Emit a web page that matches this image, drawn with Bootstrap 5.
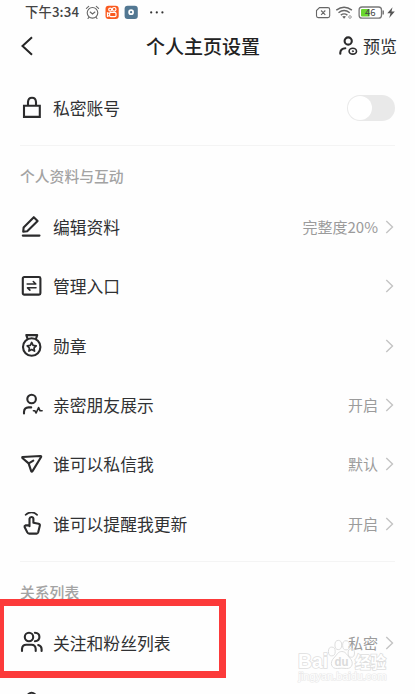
<!DOCTYPE html>
<html lang="zh-CN">
<head>
<meta charset="utf-8">
<meta name="viewport" content="width=device-width, initial-scale=1">
<title>个人主页设置</title>
<link href="https://cdn.jsdelivr.net/npm/bootstrap@5.3.0/dist/css/bootstrap.min.css" rel="stylesheet">
<style>
  body { font-family: "Noto Sans CJK SC", sans-serif; background: #fefefe; color: #303133; overflow: hidden; }
  svg { display: block; flex: none; }
  .screen { width: 415px; height: 694px; overflow: hidden; }
  .status { height: 23px; padding: 0 18px 0 25px; color: #444; }
  .clock { font: 500 13.3px/22px "Noto Sans CJK SC", sans-serif; letter-spacing: .15px; width: 60px; white-space: nowrap; }
  .topbar { height: 46px; padding: 0 18px 0 19px; }
  .page-title { font-size: 19px; font-weight: 500; line-height: 28px; color: #222; margin: 0 0 0 112px; }
  .preview { font-size: 17px; line-height: 24px; gap: 5px; }
  .setting { height: 59.3px; padding: 0 21px 0 20px; font-size: 16.8px; line-height: 24px; gap: 9px; }
  .first { height: 76px; padding-top: 1px; }
  .ico { fill: none; stroke: #2b2b2c; stroke-width: 2.1; stroke-linecap: round; stroke-linejoin: round; }
  .value { font-size: 15px; line-height: 22px; color: #9b9b9b; gap: 7px; }
  .chev { fill: none; stroke: #c4c4c4; stroke-width: 1.4; }
  .toggle { width: 48px; height: 26px; background: #e9e9e9; border-radius: 13px; padding: 1px; margin-right: -1px; }
  .knob { width: 24px; height: 24px; border-radius: 50%; background: #fff; }
  .rule { height: 1px; margin: 0 20px; background: #f4f4f4; }
  .section-name { font-size: 14.8px; font-weight: 500; line-height: 22px; color: #a3a3a3; padding-left: 20px; height: 51.5px; padding-top: 19px; }
  .marker { left: -3px; top: 599px; width: 229px; height: 79px; border: 7px solid #fc3a3a; }
  .watermark { left: 294px; top: 634px; }
</style>
<script src="https://cdn.jsdelivr.net/npm/bootstrap@5.3.0/dist/js/bootstrap.bundle.min.js"></script>
</head>
<body>
<main class="screen position-relative">
  <div class="status d-flex align-items-center">
    <span class="clock">下午3:34</span>
    <svg width="80" height="22" viewBox="85 0 80 22">
      <g fill="none" stroke="#666" stroke-width="1.1" stroke-linecap="round"><circle cx="92.5" cy="11.8" r="5.3"/><path d="M90.2 11l2.3 2 2.4-2M86.4 7.4l2.3-2M98.6 7.4l-2.3-2M89 16.3l-1 1.2M96 16.3l1 1.2"/></g>
      <rect x="105.5" y="4.7" width="13.2" height="13.3" rx="3" fill="#fa5a1f"/>
      <g fill="none" stroke="#fff" stroke-width="1.2"><circle cx="110.2" cy="8.6" r="1.5"/><circle cx="114.2" cy="8.3" r="1.8"/><rect x="109.6" y="11.4" width="6.4" height="4.3" rx="1.2"/><path d="M109.5 12.5l-2-.7v3.5l2-.8"/></g>
      <rect x="124.6" y="4.7" width="13.2" height="13.3" rx="3" fill="#527792"/><circle cx="131.1" cy="11.2" r="2" fill="none" stroke="#fff" stroke-width="1.7"/>
      <g fill="#333"><circle cx="151.2" cy="11.4" r="1.1"/><circle cx="156.8" cy="11.4" r="1.1"/><circle cx="162.4" cy="11.4" r="1.1"/></g>
    </svg>
    <svg class="ms-auto" width="82" height="22" viewBox="315 0 82 22">
      <path d="M319.5 6.6h8.4q1.8 0 1.8 1.8v6.4q0 1.8-1.8 1.8h-9.6q-1.8 0-1.8-1.8V9.5zM321.1 9.5l4.2 4.4M325.3 9.5l-4.2 4.4" fill="none" stroke="#666" stroke-width="1.1"/>
      <g fill="none" stroke="#666" stroke-width="1.4"><path d="M336.3 9.1q7.8-5.8 15.6 0M338.5 11.7q5.6-4.3 11.2 0M340.8 14.1q3.3-2.5 6.6 0"/></g><path d="M342.2 15.5q1.9-1.2 3.8 0l-1.9 2.2z" fill="#666"/><circle cx="350" cy="16" r="1.3" fill="none" stroke="#888" stroke-width=".8"/>
      <rect x="359.1" y="6" width="22.4" height="11.2" rx="3" fill="#fff" stroke="#777" stroke-width="1.3"/><path d="M362 7.9h7.5v7.6H362q-1 0-1-1V8.9q0-1 1-1z" fill="#69d62c"/><path d="M383.2 9.6v4" stroke="#777" stroke-width="1.5"/>
      <text x="365" y="15" font-family="Noto Sans CJK SC, sans-serif" font-size="9.5" fill="#444">46</text>
      <path d="M392.5 6.3l-5.2 6h3.2l-1.3 4.7 5.6-6.4h-3.3z" fill="#555"/>
    </svg>
  </div>

  <header class="topbar d-flex align-items-center">
    <svg width="15" height="20" viewBox="0 0 15 20" fill="none" stroke="#252525" stroke-width="2"><path d="M13 1.3L3.5 10l9.5 8.700"/></svg>
    <h1 class="page-title">个人主页设置</h1>
    <div class="preview d-flex align-items-center ms-auto">
      <svg class="ico" width="20" height="20" viewBox="0 0 20 20"><circle cx="10.200" cy="5" r="3.600"/><path d="M2.300 17.800v-1.300q.4-4.100 5-4.300"/><ellipse cx="14.800" cy="15.200" rx="3.700" ry="2.900" stroke-width="1.600"/><circle cx="14.800" cy="15.200" r=".5" stroke-width="1"/></svg>
      <span>预览</span>
    </div>
  </header>

  <div class="setting first d-flex align-items-center">
    <svg class="ico" width="24" height="24" viewBox="0 0 24 24"><path d="M4 9.800h15.800v11.100H4zM8 9.500V6q.3-4.200 4-4.200T16 6v3.500" stroke-linejoin="miter"/></svg>
    <span>私密账号</span>
    <div class="toggle ms-auto"><div class="knob"></div></div>
  </div>
  <div class="rule"></div>

  <div class="section-name">个人资料与互动</div>
  <div class="setting d-flex align-items-center">
    <svg class="ico" width="24" height="24" viewBox="0 0 24 24"><path d="M3.200 16.600l.4-4L13.800 2.200l3.800 3.700L7.200 16.200zM2.800 20.600h16.700"/></svg>
    <span>编辑资料</span>
    <div class="value d-flex align-items-center ms-auto"><span>完整度20%</span><svg class="chev" width="9" height="14" viewBox="0 0 9 14"><path d="M1.300 1l6.200 6-6.200 6"/></svg></div>
  </div>
  <div class="setting d-flex align-items-center">
    <svg class="ico" width="24" height="24" viewBox="0 0 24 24"><rect x="2.800" y="3" width="17.600" height="17.600" rx="1.400"/><path d="M7.200 10h8.600l-2.500-2.500M16 13.800H7.500l2.400 2.300" stroke-width="1.600"/></svg>
    <span>管理入口</span>
    <svg class="chev ms-auto" width="9" height="14" viewBox="0 0 9 14"><path d="M1.300 1l6.200 6-6.200 6"/></svg>
  </div>
  <div class="setting d-flex align-items-center">
    <svg class="ico" width="24" height="24" viewBox="0 0 24 24"><circle cx="11.700" cy="13" r="8.700"/><path d="M7.600 4.800L6.300 1.100h10.900L16 4.800"/><path d="M11.700 8.500l1.400 2.800 3.100.5-2.200 2.200.5 3.100-2.800-1.500-2.800 1.500.5-3.100-2.200-2.200 3.100-.5z" stroke-width="1.700"/></svg>
    <span>勋章</span>
    <svg class="chev ms-auto" width="9" height="14" viewBox="0 0 9 14"><path d="M1.300 1l6.200 6-6.200 6"/></svg>
  </div>
  <div class="setting d-flex align-items-center">
    <svg class="ico" width="24" height="24" viewBox="0 0 24 24"><circle cx="11.600" cy="6" r="4.300"/><path d="M4 20.400v-1.700q.3-4.200 4.600-4.300h2.600"/><path d="M13.400 17.700h1.400l1.300 2.300 2.500-5.400 1.500 3.200h2" stroke-width="1.600"/></svg>
    <span>亲密朋友展示</span>
    <div class="value d-flex align-items-center ms-auto"><span>开启</span><svg class="chev" width="9" height="14" viewBox="0 0 9 14"><path d="M1.300 1l6.200 6-6.200 6"/></svg></div>
  </div>
  <div class="setting d-flex align-items-center">
    <svg class="ico" width="24" height="24" viewBox="0 0 24 24"><path d="M2.600 5l17.900-1q1 0 .6 1l-8.600 14.100q-.7 1-1.300 0L8.600 11.400 2.400 6q-.4-.9.2-1zM8.800 11.300l4.500-2.600"/></svg>
    <span>谁可以私信我</span>
    <div class="value d-flex align-items-center ms-auto"><span>默认</span><svg class="chev" width="9" height="14" viewBox="0 0 9 14"><path d="M1.300 1l6.200 6-6.200 6"/></svg></div>
  </div>
  <div class="setting d-flex align-items-center">
    <svg class="ico" width="24" height="24" viewBox="0 0 24 24"><path d="M5.600 2.800q6.200-5 11.500 0" stroke-width="1.700"/><path d="M9.500 14.300V6.700q.3-1.700 2-1.700t1.900 1.700v4.100l5.200 1q1.600.5 1.200 2l-1.600 6.500q-.4 1.300-1.600 1.300H9.200q-1.300 0-1.900-1.200L4.600 15q-.3-1.200.8-1.600h4"/></svg>
    <span>谁可以提醒我更新</span>
    <div class="value d-flex align-items-center ms-auto"><span>开启</span><svg class="chev" width="9" height="14" viewBox="0 0 9 14"><path d="M1.300 1l6.200 6-6.200 6"/></svg></div>
  </div>
  <div class="pt-2"></div>
  <div class="rule"></div>

  <div class="section-name">关系列表</div>
  <div class="setting d-flex align-items-center">
    <svg class="ico" width="24" height="24" viewBox="0 0 24 24"><circle cx="9" cy="6" r="4.200"/><path d="M2 20v-2.200q.4-4.100 4.200-4.100h5.300q3.800 0 4.200 4.100V20M14.900 1.800q4.500.2 4.500 4.200t-4.500 4.200M18.200 14q3.200.7 3.400 4V20"/></svg>
    <span>关注和粉丝列表</span>
    <div class="value d-flex align-items-center ms-auto"><span>私密</span><svg class="chev" width="9" height="14" viewBox="0 0 9 14"><path d="M1.300 1l6.200 6-6.200 6"/></svg></div>
  </div>
  <div class="setting d-flex align-items-center">
    <svg class="ico" width="24" height="24" viewBox="0 0 24 24"><circle cx="11.600" cy="6" r="4.300"/><path d="M4 20.400v-1.700q.3-4.200 4.600-4.300h6.400q4.300.1 4.600 4.300v1.700"/></svg>
  </div>

  <div class="marker position-absolute"></div>
  <svg class="watermark position-absolute" width="100" height="56" viewBox="294 634 100 56">
    <g fill="#fff" fill-opacity=".25" stroke="#dedede" stroke-width="1">
      <ellipse cx="331.800" cy="651.500" rx="3.400" ry="4.400"/><ellipse cx="338.300" cy="645" rx="3.400" ry="4.600"/><ellipse cx="346" cy="645.300" rx="3.400" ry="4.600"/><ellipse cx="351.300" cy="653" rx="3.200" ry="4.300"/>
      <path d="M341.800 651.500c4 0 5 3.500 8 6.500 4.500 4.500 2.500 11-3.500 10.500-3-.4-6-.4-9 0-6 .5-8-6-3.500-10.500 3-3 4-6.500 8-6.500z"/>
    </g>
    <g fill="#fff" stroke="#dedede" stroke-width="1.600" paint-order="stroke">
      <text x="298" y="667.500" font-family="Liberation Sans, sans-serif" font-size="20" font-weight="700" textLength="30" lengthAdjust="spacingAndGlyphs">Bai</text>
      <text x="355" y="667.500" font-family="Noto Sans CJK SC, sans-serif" font-size="15.500" font-weight="700">经验</text>
      <text x="298.500" y="680" font-family="Liberation Sans, sans-serif" font-size="10" stroke="#e9e9e9" stroke-width="1.200" textLength="88" lengthAdjust="spacingAndGlyphs">jingyan.baidu.com</text>
    </g>
    <text x="334.500" y="666" font-family="Liberation Sans, sans-serif" font-size="12" font-weight="700" fill="#dadada" textLength="14" lengthAdjust="spacingAndGlyphs">du</text>
  </svg>
</main>
</body>
</html>
